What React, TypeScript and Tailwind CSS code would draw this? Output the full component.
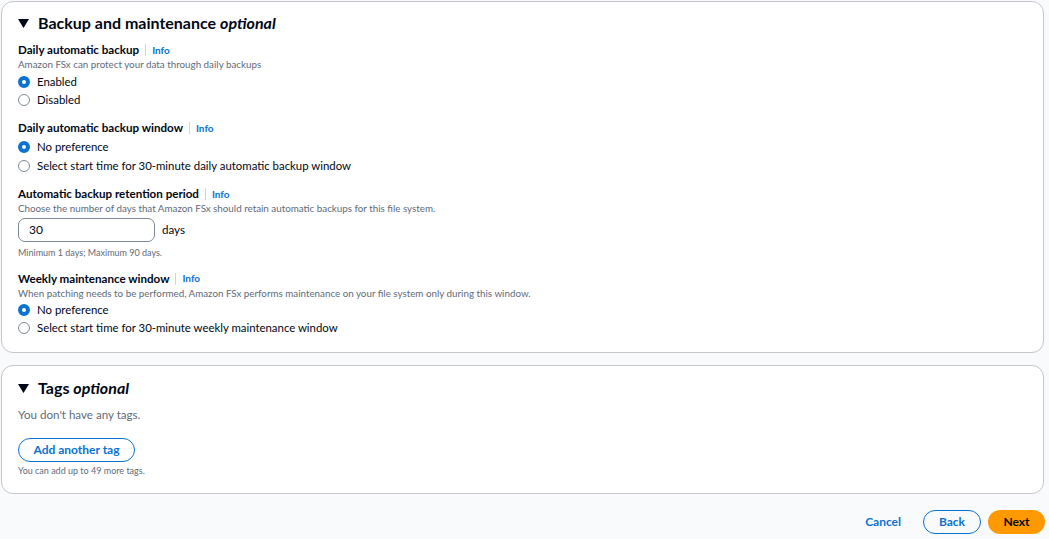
import React from "react"

function Radio({ label, checked }: { label: string; checked?: boolean }) {
  return (
    <div className="flex items-center h-[18px]">
      {checked ? (
        <span className="w-[12px] h-[12px] rounded-full border-[4px] border-[#0972d3] bg-white" />
      ) : (
        <span className="w-[12px] h-[12px] rounded-full border border-[#7d8998] bg-white" />
      )}
      <span className="ml-[7px] text-[11.4px] text-[#000716]">{label}</span>
    </div>
  )
}

function Label({ text }: { text: string }) {
  return (
    <div className="flex items-center h-[16px]">
      <span className="text-[11.6px] font-bold text-[#000716]">{text}</span>
      <span className="mx-[6px] w-px h-[12px] bg-[#d1d5db]" />
      <span className="text-[10px] font-bold text-[#0972d3]">Info</span>
    </div>
  )
}

function Desc({ text }: { text: string }) {
  return <div className="text-[9.8px] text-[#5f6b7a] leading-[12px]">{text}</div>
}

function Caret() {
  return (
    <svg width="11" height="9" viewBox="0 0 11 9" className="mr-[9px]">
      <path d="M0 0 H11 L5.5 9 Z" fill="#000716" />
    </svg>
  )
}

export default function App() {
  return (
    <div
      className="w-[1049px] h-[539px] bg-[#f9fafc] overflow-hidden px-[1px] pt-[1px]"
      style={{ fontFamily: "Lato, Roboto, sans-serif" }}
    >
      {/* BACKUP AND MAINTENANCE */}
      <div className="w-[1043px] h-[352px] bg-white border border-[#c6c6cd] rounded-[12px] px-[16px] pt-[10px]">
        <div className="flex items-center h-[22px]">
          <Caret />
          <span className="text-[16px] font-bold text-[#000716]">
            Backup and maintenance <i>optional</i>
          </span>
        </div>

        <div className="mt-[8px]">
          <Label text="Daily automatic backup" />
          <Desc text="Amazon FSx can protect your data through daily backups" />
          <div className="mt-[3px]">
            <Radio label="Enabled" checked />
            <Radio label="Disabled" />
          </div>
        </div>

        <div className="mt-[11px]">
          <Label text="Daily automatic backup window" />
          <div className="mt-[2px]">
            <Radio label="No preference" checked />
            <div className="mt-[1px]">
              <Radio label="Select start time for 30-minute daily automatic backup window" />
            </div>
          </div>
        </div>

        <div className="mt-[11px]">
          <Label text="Automatic backup retention period" />
          <Desc text="Choose the number of days that Amazon FSx should retain automatic backups for this file system." />
          <div className="flex items-start mt-[4px]">
            <div className="w-[137px] h-[24px] border border-[#7d8998] rounded-[7px] flex items-center pl-[10px] text-[12px] text-[#000716]">
              30
            </div>
            <span className="ml-[7px] mt-[3px] text-[11.6px] text-[#000716]">days</span>
          </div>
          <div className="mt-[4px] text-[9px] text-[#5f6b7a]">Minimum 1 days; Maximum 90 days.</div>
        </div>

        <div className="mt-[11px]">
          <Label text="Weekly maintenance window" />
          <Desc text="When patching needs to be performed, Amazon FSx performs maintenance on your file system only during this window." />
          <div className="mt-[2px]">
            <Radio label="No preference" checked />
            <Radio label="Select start time for 30-minute weekly maintenance window" />
          </div>
        </div>
      </div>

      {/* TAGS */}
      <div className="mt-[12px] w-[1043px] h-[129px] bg-white border border-[#c6c6cd] rounded-[12px] px-[16px] pt-[11px]">
        <div className="flex items-center h-[22px]">
          <Caret />
          <span className="text-[16px] font-bold text-[#000716]">
            Tags <i>optional</i>
          </span>
        </div>
        <div className="mt-[7px] text-[11.6px] text-[#5f6b7a]">You don't have any tags.</div>
        <button className="mt-[15px] w-[117px] h-[24px] border-[1.5px] border-[#0972d3] rounded-full text-[12px] font-bold text-[#0972d3]">
          Add another tag
        </button>
        <div className="mt-[2px] text-[9px] text-[#5f6b7a]">You can add up to 49 more tags.</div>
      </div>

      {/* FOOTER */}
      <div className="flex items-center justify-end mt-[16px] pr-[3px]">
        <span className="text-[12px] font-bold text-[#0972d3] mr-[22px]">Cancel</span>
        <button className="w-[58px] h-[24px] border-[1.5px] border-[#0972d3] rounded-full text-[12px] font-bold text-[#0972d3] mr-[7px]">
          Back
        </button>
        <button className="w-[57px] h-[24px] bg-[#ff9900] rounded-full text-[12px] font-bold text-[#000716]">
          Next
        </button>
      </div>
    </div>
  )
}
